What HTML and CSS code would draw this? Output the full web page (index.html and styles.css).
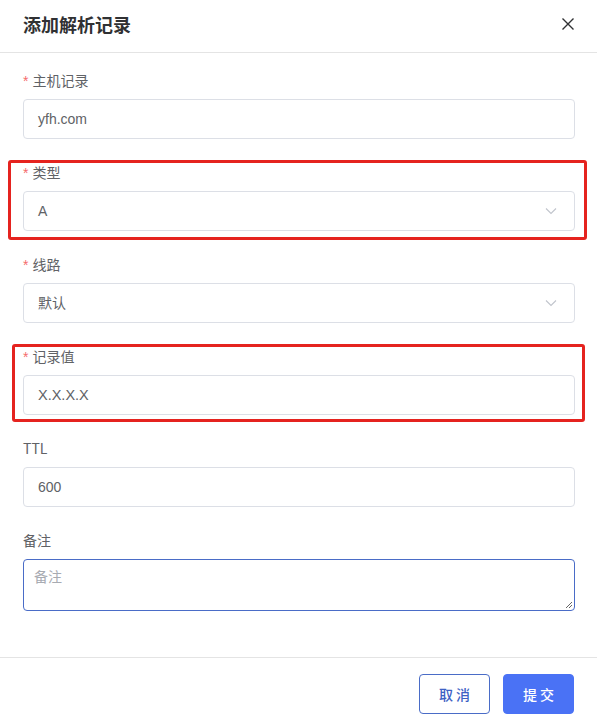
FILE: index.html
```html
<!DOCTYPE html>
<html lang="zh-CN">
<head>
<meta charset="utf-8">
<title>添加解析记录</title>
<link rel="stylesheet" href="styles.css">
</head>
<body>
<div class="dialog">
  <div class="header">
    <span class="title">添加解析记录</span>
    <svg class="close" width="14" height="14" viewBox="0 0 14 14"><path d="M1.5 1.5 L12.5 12.5 M12.5 1.5 L1.5 12.5" stroke="#303133" stroke-width="1.4" fill="none"/></svg>
  </div>
  <div class="body">
    <div class="item">
      <div class="label"><span class="req">*</span>主机记录</div>
      <div class="input">yfh.com</div>
    </div>
    <div class="item">
      <div class="mark mark-1"></div>
      <div class="label"><span class="req">*</span>类型</div>
      <div class="input select"><span>A</span><svg class="chev" width="12" height="8" viewBox="0 0 12 8"><path d="M1 1.5 L6 6.5 L11 1.5" stroke="#c0c4cc" stroke-width="1.1" fill="none"/></svg></div>
    </div>
    <div class="item">
      <div class="label"><span class="req">*</span>线路</div>
      <div class="input select"><span>默认</span><svg class="chev" width="12" height="8" viewBox="0 0 12 8"><path d="M1 1.5 L6 6.5 L11 1.5" stroke="#c0c4cc" stroke-width="1.1" fill="none"/></svg></div>
    </div>
    <div class="item">
      <div class="mark mark-2"></div>
      <div class="label"><span class="req">*</span>记录值</div>
      <div class="input big">X.X.X.X</div>
    </div>
    <div class="item">
      <div class="label">TTL</div>
      <div class="input">600</div>
    </div>
    <div class="item last">
      <div class="label">备注</div>
      <div class="textarea"><span class="ph">备注</span><svg class="grip" width="8" height="8" viewBox="0 0 8 8"><path d="M7 1 L1 7 M7 4 L4 7" stroke="#666" stroke-width="1"/></svg></div>
    </div>
  </div>
  <div class="footer">
    <div class="btn cancel">取 消</div>
    <div class="btn submit">提 交</div>
  </div>
</div>
</body>
</html>
```
FILE: styles.css
```css
* { box-sizing: border-box; }
html, body { margin: 0; padding: 0; background: #fff; }
body {
  font-family: "Noto Sans CJK SC", "Noto Sans", "Liberation Sans", sans-serif;
  color: #606266;
  width: 597px;
  height: 728px;
  overflow: hidden;
}
.dialog { width: 597px; height: 728px; display: flex; flex-direction: column; }
.header {
  height: 53px;
  border-bottom: 1px solid #e4e4e4;
  display: flex;
  align-items: center;
  justify-content: space-between;
  padding: 0 23px 4px 23px;
}
.title { font-size: 18px; font-weight: 700; color: #303133; line-height: 24px; }
.close { margin-right: -1px; }
.body { padding: 16px 22px 46px 23px; flex: 0 0 auto; }
.item { position: relative; margin-bottom: 22px; }
.item.last { margin-bottom: 0; }
.label { font-size: 14px; line-height: 22px; height: 22px; margin-bottom: 8px; color: #606266; }
.req { color: #f56c6c; margin-right: 4px; font-family: "Liberation Sans", sans-serif; }
.input {
  height: 40px;
  border: 1px solid #dcdfe6;
  border-radius: 4px;
  padding: 0 14px;
  font-size: 14px;
  line-height: 38px;
  color: #606266;
  font-family: "Liberation Sans", "Noto Sans CJK SC", sans-serif;
}
.input.big { font-size: 14.5px; }
.select { display: flex; justify-content: space-between; align-items: center; }
.select span { line-height: 38px; }
.chev { margin-right: 3px; }
.textarea {
  position: relative;
  height: 52px;
  border: 1px solid #4a6cc7;
  border-radius: 4px;
  padding: 5px 10px;
  font-size: 14px;
  line-height: 22px;
}
.ph { color: #a8abb2; }
.grip { position: absolute; right: 1px; bottom: 1px; }
.mark { position: absolute; border: 3px solid #e5231f; border-radius: 3px; pointer-events: none; }
.mark-1 { left: -15px; right: -12px; top: -1px; bottom: -9px; }
.mark-2 { left: -11px; right: -10px; top: -1px; bottom: -7px; }
.footer {
  border-top: 1px solid #e4e4e4;
  padding: 16px 23px 14px 0;
  display: flex;
  justify-content: flex-end;
  gap: 13px;
}
.btn {
  width: 71px;
  height: 40px;
  border-radius: 4px;
  font-size: 14px;
  line-height: 38px;
  text-align: center;
  font-weight: 500;
}
.cancel { border: 1px solid #4a6cc7; color: #3d61c4; background: #fff; }
.submit { border: 1px solid #4a72f5; background: #4a72f5; color: #fff; }
```
